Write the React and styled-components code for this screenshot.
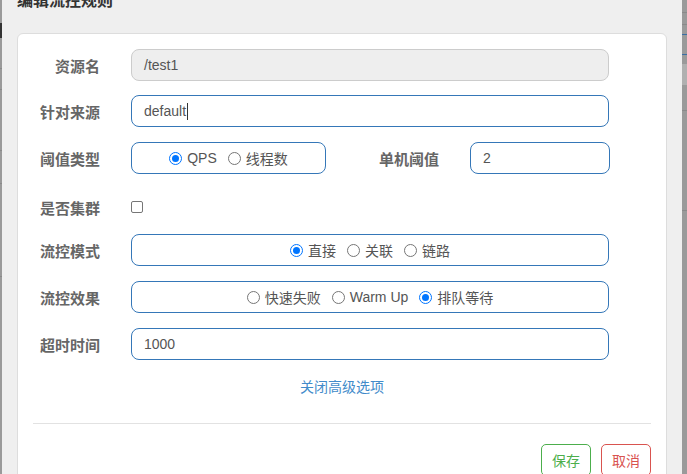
import React from "react";
import styled, { createGlobalStyle } from "styled-components";

const GlobalStyle = createGlobalStyle`
  html, body {
    margin: 0;
    padding: 0;
    overflow: hidden;
    background: #999;
  }
  body {
    font-family: "Liberation Sans", Arial, "Noto Sans CJK SC", sans-serif;
  }
`;

const Screen = styled.div`
  display: flex;
  width: 687px;
  height: 474px;
  overflow: hidden;
`;

const SideStrip = styled.div`
  width: ${(p) => p.$width}px;
  flex-shrink: 0;
  background: #9a9a9a;
  position: relative;
`;

const StripLine = styled.div`
  position: absolute;
  left: 0;
  right: 0;
  top: ${(p) => p.$top}px;
  height: ${(p) => p.$h || 1}px;
  background: ${(p) => p.$color || "#8a8a8a"};
`;

const Modal = styled.div`
  flex: 1;
  background: #efefef;
  padding: 0 15px;
  display: flex;
  flex-direction: column;
`;

const Title = styled.h4`
  flex-shrink: 0;
  margin: -9px 0 0;
  height: 42px;
  font-size: 16px;
  font-weight: bold;
  color: #333;
  line-height: 20px;
`;

const Card = styled.div`
  flex-shrink: 0;
  background: #fff;
  border: 1px solid #ddd;
  border-radius: 6px;
  padding: 15px 15px 20px;
`;

const Row = styled.div`
  display: flex;
  align-items: center;
  height: 32px;
  margin-bottom: ${(p) => (p.$mb !== undefined ? p.$mb : 15)}px;
  margin-top: ${(p) => p.$mt || 0}px;
`;

const Label = styled.label`
  width: ${(p) => p.$width || 67}px;
  flex-shrink: 0;
  text-align: right;
  font-size: 15px;
  font-weight: bold;
  color: #666;
  margin-right: 31px;
  white-space: nowrap;
`;

const Field = styled.div`
  width: ${(p) => p.$width || 478}px;
  height: 32px;
  flex-shrink: 0;
  box-sizing: border-box;
  border: 1px solid ${(p) => (p.$disabled ? "#ccc" : "#3577b8")};
  background: ${(p) => (p.$disabled ? "#eee" : "#fff")};
  border-radius: 8px;
  padding: 0 12px;
  display: flex;
  align-items: center;
  justify-content: ${(p) => (p.$center ? "center" : "flex-start")};
  font-size: 14px;
  color: #555;
`;

const Caret = styled.span`
  display: inline-block;
  width: 1px;
  height: 17px;
  background: #333;
  margin-left: 1px;
`;

const RadioItem = styled.label`
  display: inline-flex;
  align-items: center;
  font-size: 14px;
  color: #555;
  margin-right: 11px;
  &:last-child {
    margin-right: 0;
  }
`;

const RadioDot = styled.span`
  width: 13px;
  height: 13px;
  box-sizing: border-box;
  border-radius: 50%;
  margin-right: 5px;
  border: 1px solid ${(p) => (p.$checked ? "#0075ff" : "#767676")};
  background: #fff;
  display: inline-flex;
  align-items: center;
  justify-content: center;
  &::after {
    content: "";
    width: 7px;
    height: 7px;
    border-radius: 50%;
    background: ${(p) => (p.$checked ? "#0075ff" : "transparent")};
  }
`;

const Check = styled.span`
  width: 12px;
  height: 12px;
  box-sizing: border-box;
  border: 1px solid #767676;
  border-radius: 2px;
  background: #fff;
`;

const LinkRow = styled.div`
  text-align: center;
  margin-top: 17px;
  font-size: 14px;
  color: #428bca;
  height: 20px;
  line-height: 20px;
`;

const Divider = styled.hr`
  border: 0;
  border-top: 1px solid #e2e2e2;
  margin: 26px 0 0;
`;

const Footer = styled.div`
  display: flex;
  justify-content: flex-end;
  gap: 10px;
  margin-top: 20px;
`;

const Button = styled.button`
  width: 50px;
  height: 32px;
  box-sizing: border-box;
  border: 1px solid ${(p) => p.$color};
  color: ${(p) => p.$color};
  background: #fff;
  border-radius: 5px;
  font-size: 14px;
  font-family: inherit;
  padding: 0;
`;

const Radio = ({ checked, children }) => (
  <RadioItem>
    <RadioDot $checked={checked} />
    {children}
  </RadioItem>
);

const App = () => {
  return (
    <Screen>
      <GlobalStyle />
      <SideStrip $width={2}>
        <StripLine $top={23} $h={15} $color="#333" />
        <StripLine $top={68} />
        <StripLine $top={89} />
        <StripLine $top={150} />
        <StripLine $top={183} />
        <StripLine $top={276} />
      </SideStrip>
      <Modal>
        <Title>编辑流控规则</Title>
        <Card>
          <Row $mb={14}>
            <Label>资源名</Label>
            <Field $disabled>/test1</Field>
          </Row>
          <Row>
            <Label>针对来源</Label>
            <Field>
              default
              <Caret />
            </Field>
          </Row>
          <Row>
            <Label>阈值类型</Label>
            <Field $width={195} $center>
              <Radio checked>QPS</Radio>
              <Radio>线程数</Radio>
            </Field>
            <Label $width={113}>单机阈值</Label>
            <Field $width={140}>2</Field>
          </Row>
          <Row $mt={17} $mb={11}>
            <Label>是否集群</Label>
            <Check />
          </Row>
          <Row>
            <Label>流控模式</Label>
            <Field $center>
              <Radio checked>直接</Radio>
              <Radio>关联</Radio>
              <Radio>链路</Radio>
            </Field>
          </Row>
          <Row>
            <Label>流控效果</Label>
            <Field $center>
              <Radio>快速失败</Radio>
              <Radio>Warm Up</Radio>
              <Radio checked>排队等待</Radio>
            </Field>
          </Row>
          <Row $mb={0}>
            <Label>超时时间</Label>
            <Field>1000</Field>
          </Row>
          <LinkRow>关闭高级选项</LinkRow>
          <Divider />
          <Footer>
            <Button $color="#4cae4c">保存</Button>
            <Button $color="#d9534f">取消</Button>
          </Footer>
        </Card>
      </Modal>
      <SideStrip $width={5}>
        <StripLine $top={12} />
        <StripLine $top={24} />
        <StripLine $top={34} $color="#3a6ea5" />
        <StripLine $top={54} $color="#3a6ea5" />
        <StripLine $top={64} $h={21} $color="#b0b0b0" />
        <StripLine $top={110} />
        <StripLine $top={210} />
      </SideStrip>
    </Screen>
  );
};

export default App;
